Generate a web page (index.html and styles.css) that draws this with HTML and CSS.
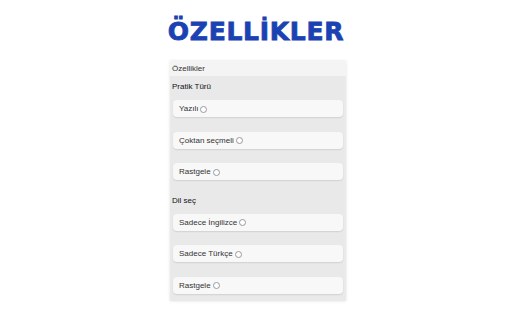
FILE: index.html
```html
<!DOCTYPE html>
<html lang="tr">
<head>
<meta charset="utf-8">
<link rel="stylesheet" href="styles.css">
</head>
<body>
<div class="page">
  <h1 class="title">ÖZELLİKLER</h1>
  <div class="panel">
    <div class="panel-head">Özellikler</div>
    <div class="panel-body">
      <div class="group-label">Pratik Türü</div>
      <label class="card">Yazılı <span class="radio"></span></label>
      <label class="card">Çoktan seçmeli <span class="radio"></span></label>
      <label class="card">Rastgele <span class="radio"></span></label>
      <div class="group-label">Dil seç</div>
      <label class="card">Sadece İngilizce <span class="radio"></span></label>
      <label class="card">Sadece Türkçe <span class="radio"></span></label>
      <label class="card last">Rastgele <span class="radio"></span></label>
    </div>
  </div>
</div>
</body>
</html>
```
FILE: styles.css
```css
html, body {
  margin: 0;
  padding: 0;
  background: #ffffff;
}
.page {
  width: 512px;
  height: 320px;
  display: flex;
  flex-direction: column;
  align-items: center;
  font-family: "Liberation Sans", Arial, sans-serif;
}
.title {
  margin: 17px 0 0 0;
  font-family: "DejaVu Sans", sans-serif;
  font-weight: bold;
  font-size: 25px;
  line-height: 30px;
  letter-spacing: 0.7px;
  color: #1a42b2;
  -webkit-text-stroke: 0.8px #1a42b2;
  height: 30px;
}
.panel {
  margin-top: 14px;
  margin-left: 4px;
  width: 176px;
  background: #e9e9e9;
  box-shadow: 0 0 3px rgba(0,0,0,0.12);
}
.panel-head {
  height: 15px;
  line-height: 15px;
  padding-left: 2px;
  font-size: 8px;
  color: #333;
  background: #f4f4f4;
}
.panel-body {
  padding: 5px 0 7px 0;
  display: flex;
  flex-direction: column;
}
.group-label {
  height: 12px;
  line-height: 12px;
  padding-left: 2px;
  margin-bottom: 7px;
  font-size: 8px;
  color: #111;
}
.card {
  display: flex;
  align-items: center;
  gap: 2px;
  height: 17px;
  margin: 0 3px 14.5px 3px;
  padding-left: 6px;
  font-size: 8px;
  color: #333;
  background: #f8f8f8;
  border-radius: 4px;
  box-shadow: 0 1px 1.5px rgba(0,0,0,0.10);
}
.card.last {
  margin-bottom: 0;
}
.radio {
  width: 5px;
  height: 5px;
  border: 1px solid #9a9a9a;
  border-radius: 50%;
  background: #fff;
  margin-top: 1px;
}
```
